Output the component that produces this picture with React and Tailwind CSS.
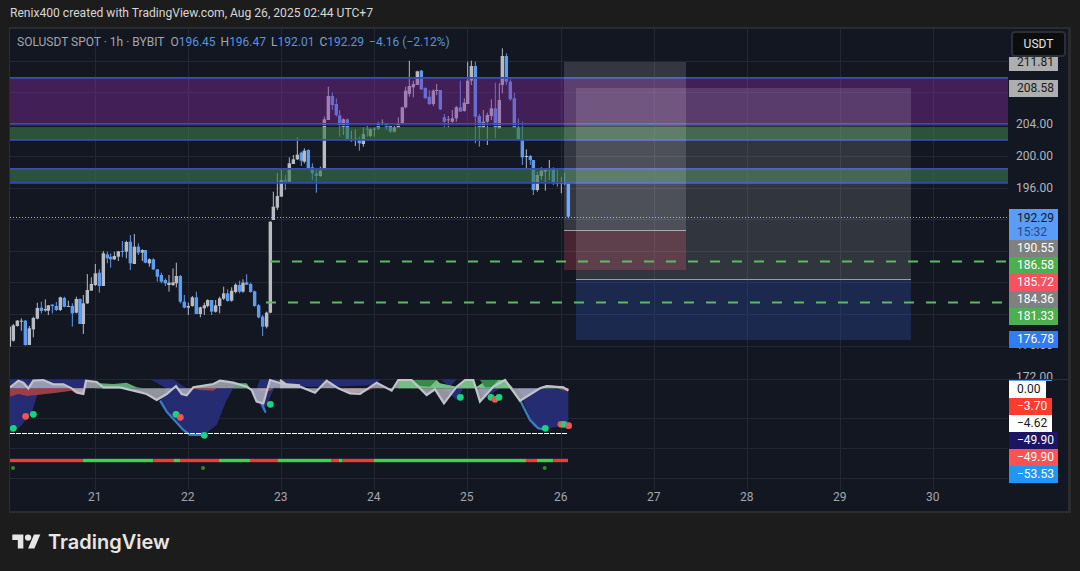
const G = "#b8bbc2";
const B = "#5c9df2";
// [xz, wickTop, wickBottom, bodyTop, bodyBottom, up]
const a8 = [[28,380,445,380,440,1],[40,372,425,376,422,1],[52,360,380,362,378,1],[64,355,392,362,365,1],[76,360,437,362,435,0],[88,378,435,385,435,1],[100,350,412,354,388,1],[112,308,358,324,356,1],[124,305,340,323,333,0],[136,298,335,327,331,1],[145,315,345,316,332,1],[157,312,340,314,318,0],[169,306,333,318,330,0],[181,290,333,292,330,1],[193,290,322,294,320,0],[205,302,320,318,320,1],[217,310,380,318,340,0],[229,290,340,297,338,1],[240,295,372,297,372,0],[250,285,402,310,372,1],[262,222,312,270,310,1],[274,232,272,252,272,1],[286,192,258,220,255,1],[298,208,278,218,258,0],[310,153,258,160,258,1],[322,155,190,163,175,0],[332,160,203,170,178,0],[343,155,180,168,178,1],[355,153,183,154,170,1],[367,123,172,153,155,0],[379,122,175,126,155,1],[391,105,210,125,190,0],[403,102,192,140,192,1],[415,130,165,140,158,0],[427,148,183,150,158,1],[436,150,190,150,188,0],[448,175,200,178,190,1],[460,175,210,178,208,0],[472,207,245,208,230,0],[484,218,250,225,245,0],[496,235,258,240,250,0],[507,225,275,248,255,1],[519,205,258,247,255,1],[529,188,262,228,250,1],[541,225,310,228,305,0],[553,285,325,305,323,0],[565,308,345,318,323,1],[577,288,320,292,318,1],[589,275,342,292,342,0],[601,320,352,322,342,1],[613,308,345,316,325,1],[623,298,322,300,318,1],[635,300,345,300,335,0],[647,300,338,316,335,1],[659,290,340,295,318,1],[671,260,300,280,296,1],[683,268,305,280,303,0],[695,262,305,272,302,1],[707,250,280,254,276,1],[719,242,280,255,275,0],[729,238,278,248,275,1],[740,223,255,247,254,0],[752,248,278,252,276,0],[764,272,320,274,318,0],[776,312,355,316,352,0],[788,345,408,350,380,0],[800,335,385,338,380,1],[811,64,340,65,338,1]];
const a9 = [[40,455,540,500,540,1],[52,398,510,468,503,1],[64,390,470,420,470,1],[76,405,450,420,425,0],[88,352,425,370,425,1],[100,345,372,358,372,1],[112,292,360,344,358,1],[124,335,378,338,362,0],[133,325,370,332,365,1],[145,328,385,330,385,0],[157,370,420,382,400,0],[169,385,458,400,408,0],[181,380,410,392,408,1],[193,230,390,238,388,1],[205,140,240,168,240,1],[217,158,210,168,195,0],[229,175,230,192,225,0],[239,210,290,226,258,0],[250,235,285,238,260,1],[262,236,300,238,300,0],[274,272,305,298,300,1],[286,268,318,296,298,1],[298,290,332,298,310,0],[310,262,320,282,312,1],[322,255,290,266,268,0],[331,265,292,268,288,1],[343,262,290,266,268,1],[355,245,270,252,266,0],[367,238,255,248,252,1],[379,250,270,252,260,0],[391,255,280,258,275,0],[403,258,278,262,275,1],[415,232,262,252,262,1],[427,200,250,202,250,1],[437,140,205,152,202,1],[448,62,170,138,162,1],[460,122,172,132,142,1],[472,92,135,94,135,1],[484,90,150,92,148,0],[496,142,175,144,175,0],[508,150,195,170,192,0],[520,148,198,152,192,1]];
const a10 = [[20,132,165,150,152,1],[31,150,210,150,208,0],[43,222,262,232,245,0],[55,228,262,238,240,1],[67,210,248,235,245,1],[79,198,245,202,235,1],[91,122,215,202,215,0],[103,175,215,188,213,1],[113,65,192,122,192,1],[124,62,135,78,122,1],[136,65,310,78,230,0],[148,222,320,228,262,0],[160,210,262,245,262,1],[172,218,315,225,245,1],[184,178,240,205,228,1],[196,128,295,205,262,0],[208,130,265,180,265,1],[217,25,160,48,135,1],[229,40,135,48,125,0],[241,118,182,125,178,0],[253,158,262,175,262,0],[265,235,300,262,300,0],[277,245,375,300,352,0],[289,328,388,348,350,1],[301,345,375,348,360,0],[310,360,465,360,450,0],[322,395,455,405,450,1],[334,382,420,392,408,1],[346,385,452,390,395,1],[358,360,420,388,390,1],[370,382,435,388,430,0],[382,390,440,428,432,0],[394,410,460,428,432,1],[404,398,435,428,432,0],[415,430,535,432,530,0]];
const conv = (arr, ox, oy) => arr.map(([x, wt, wb, bt, bb, up]) => ({ x: ox + x / 3, wt: oy + wt / 3, wb: oy + wb / 3, bt: oy + bt / 3, bb: oy + bb / 3, c: up ? G : B }));
const candles = [...conv(a8, 0, 200), ...conv(a9, 260, 40), ...conv(a10, 430, 40)];

const gridH = [61, 92, 124, 156, 188, 219, 251, 282, 314, 346, 379, 418, 448, 478];
const gridV = [95, 188, 281, 374, 467, 561, 654, 747, 840, 933];
const dates = ["21", "22", "23", "24", "25", "26", "27", "28", "29", "30"];

const z5 = (pts) => pts.map(([x, y]) => `${x / 3},${370 + y / 3}`).join(" ");
const z6 = (pts) => pts.map(([x, y]) => `${x / 3 + 280},${370 + y / 3}`).join(" ");

const line5 = [[30,52],[55,32],[70,38],[85,55],[100,32],[130,30],[160,43],[190,43],[215,55],[232,68],[250,72],[258,32],[290,36],[310,52],[360,52],[400,62],[440,72],[470,90],[500,72],[528,48],[545,72],[560,76],[580,52],[640,42],[660,32],[700,38],[740,50],[755,60],[770,95],[790,100],[810,30],[850,42],[900,46]];
const line6 = [[0,30],[20,45],[60,50],[105,68],[140,32],[175,55],[210,70],[240,72],[290,38],[335,62],[355,30],[395,30],[440,75],[465,58],[492,100],[530,50],[555,30],[580,30],[600,95],[640,50],[675,30],[720,92],[780,55],[800,48],[850,52],[865,62]];

const navy5 = [
  [[30,55],[30,188],[60,170],[95,130],[110,80],[120,55]],
  [[30,28],[260,28],[260,55],[30,55]],
  [[450,28],[500,55],[480,92],[500,125],[550,180],[570,195],[610,195],[650,165],[680,90],[700,55],[560,55],[520,28]],
  [[755,55],[790,125],[820,60],[820,28],[780,28],[770,55]],
  [[810,28],[900,28],[900,50],[810,50]],
];
const navy6 = [
  [[0,28],[140,28],[130,50],[0,50]],
  [[150,28],[300,28],[290,45],[150,50]],
  [[490,55],[530,90],[550,55]],
  [[480,28],[530,28],[510,50]],
  [[600,55],[610,88],[660,55]],
  [[715,55],[760,170],[790,178],[865,165],[865,60],[780,55]],
];
const red5 = [[[30,55],[250,55],[250,70],[225,70],[215,62],[170,68],[110,75],[80,78],[55,72],[30,80]], [[580,55],[650,55],[640,62],[600,60]], [[770,55],[820,55],[810,63],[780,63]]];
const red6 = [[[190,55],[280,55],[255,65],[200,68]], [[830,55],[865,55],[865,64],[845,60]]];
const green5 = [[[290,55],[300,40],[340,42],[380,38],[410,52],[430,55]], [[700,55],[715,40],[740,40],[750,55]]];
const green6 = [[[355,55],[358,30],[395,30],[420,40],[470,30],[480,40],[530,50],[555,30],[580,30],[590,50],[620,30],[675,30],[700,55]], [[780,55],[800,46],[850,50],[860,55]]];
const darkGreen6 = [[[395,30],[470,30],[450,50],[420,48]], [[600,30],[655,30],[635,52],[615,52]]];

const bar = [
  [30, 248, 0, 5], [248, 460, 1, 5], [460, 520, 0, 5], [520, 540, 1, 5], [540, 657, 0, 5], [657, 750, 1, 5], [750, 832, 0, 5], [832, 840, 1, 5],
  [0, 155, 1, 6], [155, 177, 0, 6], [177, 188, 1, 6], [188, 282, 0, 6], [282, 738, 1, 6], [738, 771, 0, 6], [771, 820, 1, 6], [820, 864, 0, 6],
].map(([a, b, g, z]) => ({ x: a / 3 + (z === 6 ? 280 : 0), w: (b - a) / 3, c: g ? "#3fd24f" : "#ee3b35" }));

const dots = [
  [40/3, 175, "#14d67f"], [77/3, 139, "#f25353"], [100/3, 133, "#14d67f"], [528/3, 133, "#14d67f"], [541/3, 142, "#f25353"], [613/3, 196, "#14d67f"], [811/3, 103, "#14d67f"],
  [541/3+280, 82, "#14d67f"], [633/3+280, 82, "#14d67f"], [645/3+280, 88, "#f25353"], [657/3+280, 82, "#14d67f"], [796/3+280, 175, "#14d67f"], [843/3+280, 163, "#f25353"], [852/3+280, 163, "#14d67f"], [866/3+280, 167, "#f25353"],
];
const smallDots = [39/3, 609/3, 794/3+280];

const axisText = [
  { v: "204.00", y: 124.5 }, { v: "200.00", y: 156.5 }, { v: "196.00", y: 188.5 }, { v: "176.00", y: 345 }, { v: "172.00", y: 377 },
];
const tags = [
  { v: "211.81", top: 57, h: 14, w: 49, bg: "bg-[#aeaeae]", fg: "text-[#1a1a1a]" },
  { v: "208.58", top: 80, h: 17, w: 49, bg: "bg-[#aeaeae]", fg: "text-[#1a1a1a]" },
  { v: "190.55", top: 240, h: 17, w: 49, bg: "bg-[#808080]", fg: "text-white" },
  { v: "186.58", top: 257, h: 17, w: 49, bg: "bg-[#4caf50]", fg: "text-white" },
  { v: "185.72", top: 274, h: 17, w: 49, bg: "bg-[#f7525f]", fg: "text-white" },
  { v: "184.36", top: 291, h: 17, w: 49, bg: "bg-[#808080]", fg: "text-white" },
  { v: "181.33", top: 308, h: 17, w: 49, bg: "bg-[#4caf50]", fg: "text-white" },
  { v: "176.78", top: 331, h: 17, w: 49, bg: "bg-[#2f7cf6]", fg: "text-white" },
  { v: "0.00", top: 381, h: 17, w: 37, bg: "bg-white", fg: "text-[#131722]" },
  { v: "−3.70", top: 398, h: 17, w: 43, bg: "bg-[#ff3b30]", fg: "text-white" },
  { v: "−4.62", top: 415, h: 17, w: 43, bg: "bg-white", fg: "text-[#131722]" },
  { v: "−49.90", top: 432, h: 17, w: 49, bg: "bg-[#1e1464]", fg: "text-white" },
  { v: "−49.90", top: 449, h: 17, w: 49, bg: "bg-[#ff5252]", fg: "text-white" },
  { v: "−53.53", top: 466, h: 17, w: 49, bg: "bg-[#2196f3]", fg: "text-white" },
];

function ChartSvg() {
  return (
    <svg className="block w-[998px] h-[461px]" viewBox="10 29 998 461">
      {gridH.map((y) => <line key={y} x1="10" x2="1008" y1={y + 0.5} y2={y + 0.5} stroke="#232733" strokeWidth="1" />)}
      {gridV.map((x) => <line key={x} x1={x + 0.5} x2={x + 0.5} y1="29" y2="490" stroke="#232733" strokeWidth="1" />)}
      {candles.map((k, i) => (
        <g key={i}>
          <rect x={k.x - 0.5} y={k.wt} width="1" height={k.wb - k.wt} fill={k.c} />
          <rect x={k.x - 1.7} y={k.bt} width="3.4" height={Math.max(k.bb - k.bt, 1)} fill={k.c} />
        </g>
      ))}
      <rect x="10" y="78" width="998" height="46" fill="#822b9e" opacity="0.43" />
      <rect x="10" y="127" width="998" height="13" fill="#397943" opacity="0.62" />
      <rect x="10" y="169" width="998" height="14" fill="#397943" opacity="0.62" />
      <rect x="10" y="77" width="998" height="1.8" fill="#3650b0" />
      <rect x="10" y="123" width="998" height="1.6" fill="#3650b0" />
      <rect x="10" y="125" width="998" height="1" fill="#1a2a6c" />
      <rect x="10" y="139" width="998" height="1.8" fill="#3650b0" />
      <rect x="10" y="168" width="998" height="1.8" fill="#3650b0" />
      <rect x="10" y="182" width="998" height="1.8" fill="#2c49bc" />

      <rect x="564" y="62" width="122" height="169" fill="#ffffff" opacity="0.14" />
      <rect x="564" y="231" width="122" height="39" fill="#d2495e" opacity="0.28" />
      <rect x="564" y="230" width="122" height="1" fill="#a09e9e" />
      <rect x="576" y="88" width="335" height="191" fill="#ffffff" opacity="0.13" />
      <rect x="576" y="279" width="335" height="61" fill="#2a4fa8" opacity="0.33" />
      <rect x="576" y="279" width="335" height="1" fill="#989ba2" />

      <line x1="270" x2="1008" y1="261.5" y2="261.5" stroke="#5fb865" strokeWidth="2" strokeDasharray="10 12" />
      <line x1="266" x2="1008" y1="302.5" y2="302.5" stroke="#5fb865" strokeWidth="2" strokeDasharray="10 12" />
      <line x1="10" x2="1008" y1="217.5" y2="217.5" stroke="#9db6e6" strokeWidth="1" strokeDasharray="1 2" />

      {navy5.map((p, i) => <polygon key={i} points={z5(p)} fill="#262c72" />)}
      {navy6.map((p, i) => <polygon key={i} points={z6(p)} fill="#262c72" />)}
      {red5.map((p, i) => <polygon key={i} points={z5(p)} fill="#9c3e48" />)}
      {red6.map((p, i) => <polygon key={i} points={z6(p)} fill="#9c3e48" />)}
      <polygon points={z5([[30,55], ...line5, [900,55]])} fill="#c2c5cd" opacity="0.72" />
      <polygon points={z6([[0,55], ...line6, [865,55]])} fill="#c2c5cd" opacity="0.72" />
      {green5.map((p, i) => <polygon key={i} points={z5(p)} fill="#5fa878" />)}
      {green6.map((p, i) => <polygon key={i} points={z6(p)} fill="#74c083" />)}
      {darkGreen6.map((p, i) => <polygon key={i} points={z6(p)} fill="#348b48" />)}
      <polyline points={z5([[480,92],[500,125],[550,180],[570,195],[610,195]])} fill="none" stroke="#3b7dc4" strokeWidth="2.2" />
      <polyline points={z5([[785,100],[797,128]])} fill="none" stroke="#3b7dc4" strokeWidth="2.2" />
      <polyline points={z6([[720,90],[750,150],[775,175],[800,178]])} fill="none" stroke="#3b7dc4" strokeWidth="2.2" />
      <polyline points={z5(line5)} fill="none" stroke="#c0c3cc" strokeWidth="2.2" />
      <polyline points={z6(line6)} fill="none" stroke="#c0c3cc" strokeWidth="2.2" />
      <line x1="10" x2="568" y1="433.5" y2="433.5" stroke="#ffffff" strokeWidth="1" strokeDasharray="5 1" />
      {bar.map((s, i) => <rect key={i} x={s.x} y="458.8" width={s.w} height="3.4" fill={s.c} />)}
      {dots.map(([x, y, c], i) => <circle key={i} cx={x} cy={370 + y / 3} r="3.4" fill={c} />)}
      {smallDots.map((x, i) => <circle key={i} cx={x} cy="468" r="2" fill="#2f8a2a" />)}
    </svg>
  );
}

function Legend() {
  const Item = ({ k, v }) => (
    <span className="ml-[5px] text-[#5c93dc]"><span className="text-[#a3a6af]">{k}</span>{v}</span>
  );
  return (
    <div className="absolute left-[7px] top-[5px] flex items-center h-[16px] text-[12px] leading-[16px] text-[#a3a6af] whitespace-nowrap">
      <span className="mr-[1px]">SOLUSDT SPOT · 1h · BYBIT</span>
      <Item k="O" v="196.45" />
      <Item k="H" v="196.47" />
      <Item k="L" v="192.01" />
      <Item k="C" v="192.29" />
      <span className="ml-[5px] text-[#5c93dc]">−4.16 (−2.12%)</span>
    </div>
  );
}

function PriceAxis() {
  return (
    <div className="relative w-[60px] h-[461px] text-[12px] leading-[17px] overflow-hidden">
      {axisText.map((t) => (
        <div key={t.v} style={{ top: t.y - 29 - 8.5 }} className="absolute left-[8px] h-[17px] text-[#b2b5be]">{t.v}</div>
      ))}
      <div className="absolute left-0 right-0 top-[350px] h-[1px] bg-[#2a2e39]" />
      {tags.map((t, i) => (
        <div key={i} style={{ top: t.top - 29, height: t.h, width: t.w }} className={`absolute left-[1px] flex items-end pl-[8px] ${t.bg} ${t.fg}`}>{t.v}</div>
      ))}
      <div className="absolute left-[1px] top-[351px] h-[1px] w-[43px] bg-[#5b9cf6]" />
      <div className="absolute left-[1px] top-[180px] w-[49px] h-[31px] bg-[#5b9cf6] text-[#131722] pl-[8px] leading-[14px] pt-[2px]">
        <div>192.29</div>
        <div className="text-[#1f4a85]">15:32</div>
      </div>
      <div className="absolute left-[3px] top-[2px] w-[55px] h-[26px] flex items-center justify-center rounded-[4px] border-2 border-[#2a2e39] bg-[#0d0d0d] text-[#e6e6e6]">USDT</div>
    </div>
  );
}

export default function App() {
  return (
    <div className="w-[1080px] h-[571px] bg-[#1c1c1c] flex flex-col overflow-hidden" style={{ fontFamily: 'Roboto, "Liberation Sans", sans-serif' }}>
      <div className="h-[27px] pl-[10px] flex items-center text-[12.1px] text-[#d6d6d6] whitespace-nowrap">
        Renix400 created with TradingView.com, Aug 26, 2025 02:44 UTC+7
      </div>
      <div className="ml-[9px] w-[1062px] h-[486px] border-l border-t-2 border-r-[3px] border-b-2 border-[#2b2c2e] bg-[#131722] flex flex-col">
        <div className="relative flex h-[461px]">
          <ChartSvg />
          <Legend />
          <PriceAxis />
        </div>
        <div className="relative flex-1 text-[12px] leading-[14px] text-[#a3a6af]">
          {dates.map((d, i) => (
            <span key={d} style={{ left: gridV[i] - 10 - 7 }} className="absolute top-0">{d}</span>
          ))}
        </div>
      </div>
      <div className="flex-1 flex items-center pl-[12px] gap-[7px] pb-[1px]">
        <svg width="29" height="15" viewBox="0 3.5 36 19" fill="#e6e6e6">
          <path d="M14 22H7V11H0V4h14v18zM28 22h-8l7.5-18h8L28 22z" />
          <circle cx="20" cy="8" r="4" />
        </svg>
        <span className="text-[20px] leading-none font-semibold text-[#e6e6e6]" style={{ fontFamily: 'Inter, sans-serif' }}>TradingView</span>
      </div>
    </div>
  );
}
